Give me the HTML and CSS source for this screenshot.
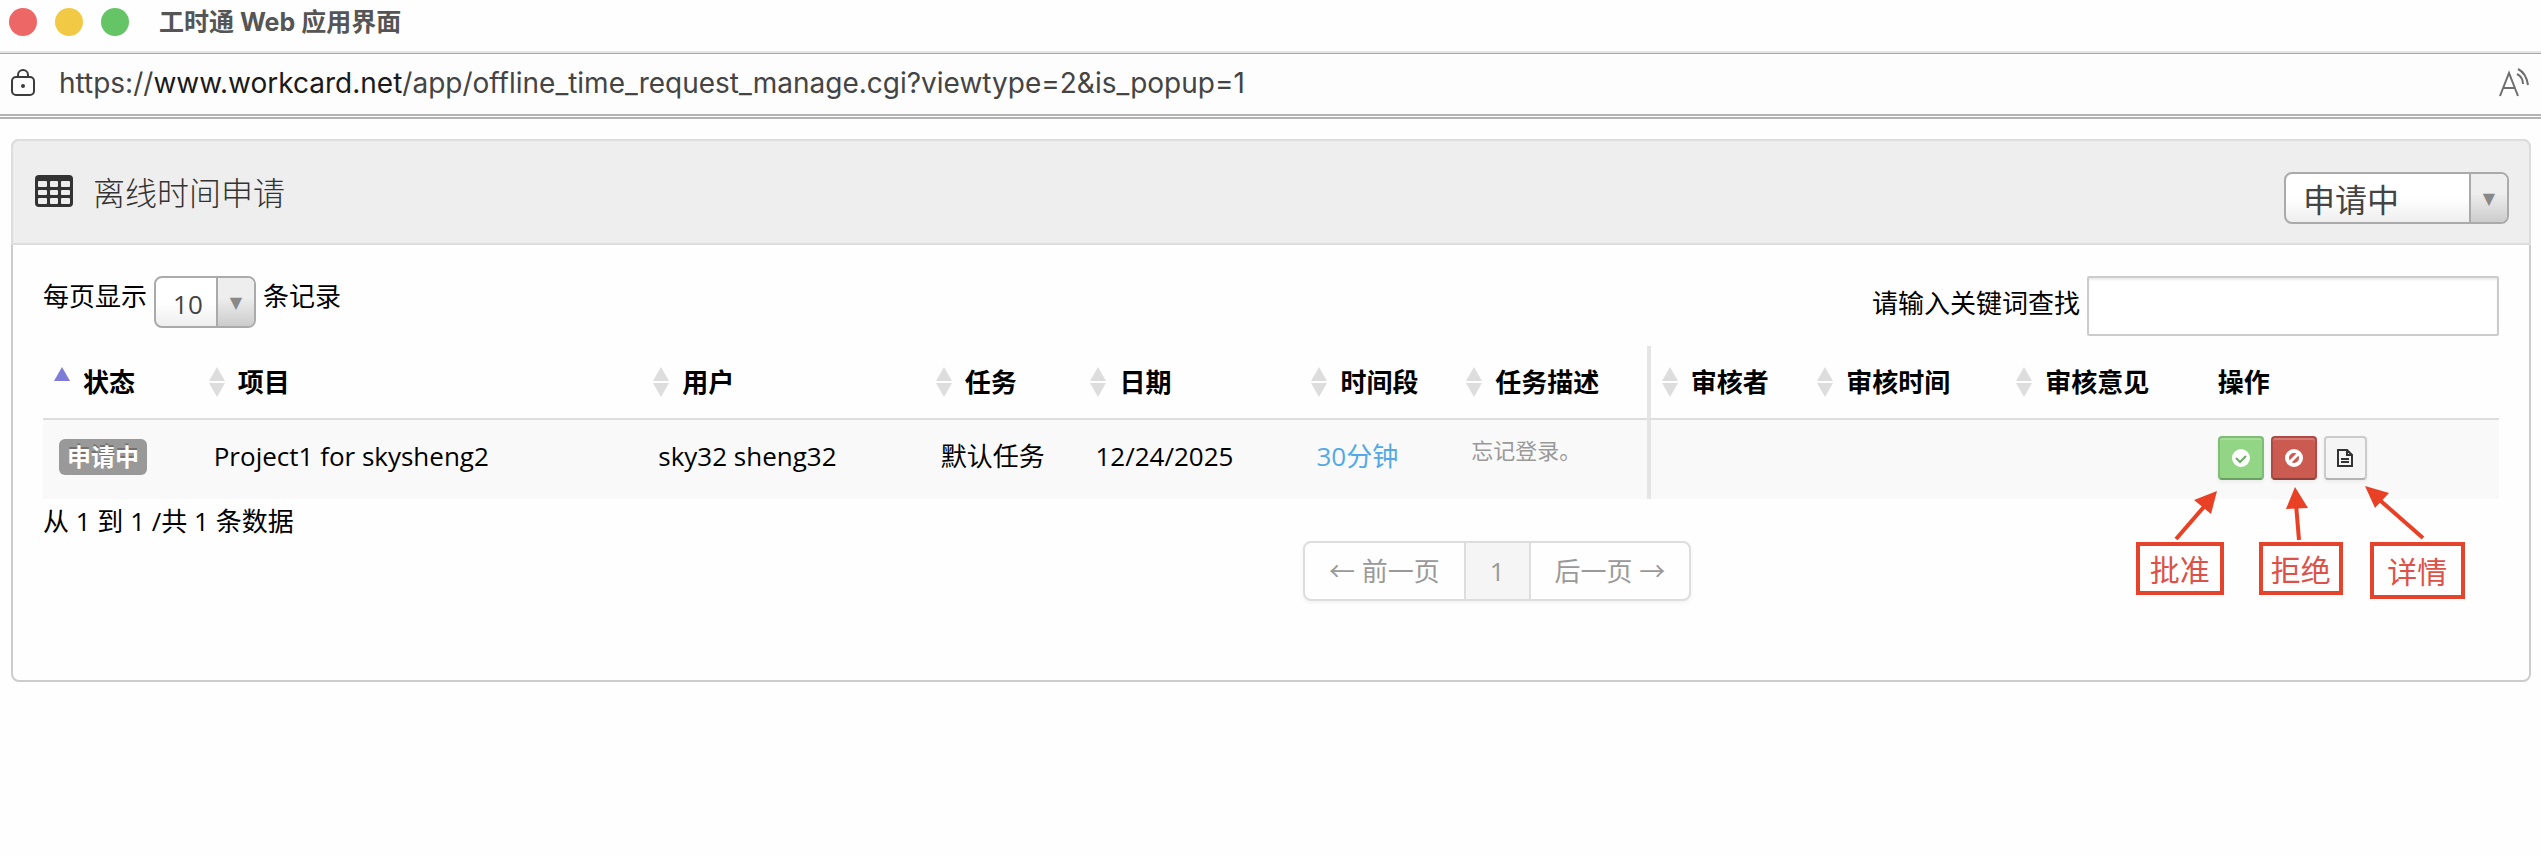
FILE: index.html
```html
<!DOCTYPE html>
<html lang="zh-CN">
<head>
  <meta charset="UTF-8">
  <meta name="viewport" content="width=device-width, initial-scale=1.0">
  <title>工时通 Web 应用界面</title>
  <link rel="stylesheet" href="styles.css">
</head>
<body>
  <header class="titlebar">
    <span class="dot dot-red"></span>
    <span class="dot dot-yellow"></span>
    <span class="dot dot-green"></span>
    <span class="window-title">工时通 Web 应用界面</span>
  </header>

  <div class="addressbar">
    <svg class="lock" width="24" height="28" viewBox="0 0 24 28" fill="none" stroke="#3c3c3c" stroke-width="2">
      <rect x="1" y="8" width="22" height="18" rx="4"/>
      <path d="M7 8V6a5 5 0 0 1 10 0v2"/>
      <circle cx="12" cy="17" r="2" fill="#3c3c3c" stroke="none"/>
    </svg>
    <span class="url">https://<span class="host">www.workcard.net</span>/app/offline_time_request_manage.cgi?viewtype=2&amp;is_popup=1</span>
    <svg class="read-aloud" width="32" height="30" viewBox="0 0 32 30" fill="none" stroke="#6e6e6e" stroke-width="2">
      <path d="M2 28L11 5l9 23M5 20h12M19 6c4 2 6 6 6 10M20 1c6 3 9 9 10 16"/>
    </svg>
  </div>

  <main class="panel">
    <div class="panel-head">
      <svg class="table-icon" width="38" height="32" viewBox="0 0 38 32">
        <rect width="38" height="32" rx="4" fill="#333"/>
        <g fill="#eee">
          <rect x="3" y="6" width="9" height="6" rx="1"/><rect x="15" y="6" width="8" height="6" rx="1"/><rect x="26" y="6" width="9" height="6" rx="1"/>
          <rect x="3" y="15" width="9" height="5" rx="1"/><rect x="15" y="15" width="8" height="5" rx="1"/><rect x="26" y="15" width="9" height="5" rx="1"/>
          <rect x="3" y="23" width="9" height="6" rx="1"/><rect x="15" y="23" width="8" height="6" rx="1"/><rect x="26" y="23" width="9" height="6" rx="1"/>
        </g>
      </svg>
      <h1>离线时间申请</h1>
      <span class="select select-status">
        <select aria-label="状态">
          <option>申请中</option>
        </select>
      </span>
    </div>

    <div class="panel-body">
      <div class="toolbar">
        <div class="page-size">
          <label for="pageSize">每页显示</label>
          <span class="select select-size">
            <select id="pageSize">
              <option>10</option>
            </select>
          </span>
          <span>条记录</span>
        </div>
        <div class="search">
          <label for="keyword">请输入关键词查找</label>
          <input type="text" id="keyword">
        </div>
      </div>

      <table class="requests">
        <colgroup>
          <col class="col-state">
          <col class="col-project">
          <col class="col-user">
          <col class="col-task">
          <col class="col-date">
          <col class="col-period">
          <col class="col-desc">
          <col class="col-reviewer">
          <col class="col-time">
          <col class="col-opinion">
          <col class="col-actions">
        </colgroup>
        <thead>
          <tr>
            <th class="sort sort-asc">状态</th>
            <th class="sort">项目</th>
            <th class="sort">用户</th>
            <th class="sort">任务</th>
            <th class="sort">日期</th>
            <th class="sort">时间段</th>
            <th class="sort">任务描述</th>
            <th class="sort divider">审核者</th>
            <th class="sort">审核时间</th>
            <th class="sort">审核意见</th>
            <th>操作</th>
          </tr>
        </thead>
        <tbody>
          <tr>
            <td><span class="badge">申请中</span></td>
            <td>Project1 for skysheng2</td>
            <td>sky32 sheng32</td>
            <td>默认任务</td>
            <td>12/24/2025</td>
            <td><a href="#">30分钟</a></td>
            <td class="desc">忘记登录。</td>
            <td class="divider"></td>
            <td></td>
            <td></td>
            <td class="actions">
              <div class="buttons">
                <button class="btn btn-ok" aria-label="批准">
                  <svg width="20" height="20" viewBox="0 0 20 20"><circle cx="10" cy="10" r="9" fill="#fff"/><path d="M5 10l4 4 6-6" fill="none" stroke="#69ad62" stroke-width="2"/></svg>
                </button>
                <button class="btn btn-no" aria-label="拒绝">
                  <svg width="20" height="20" viewBox="0 0 20 20" fill="none" stroke="#fff"><circle cx="10" cy="10" r="7" stroke-width="4"/><path d="M5 15L15 5" stroke-width="3"/></svg>
                </button>
                <button class="btn btn-info" aria-label="详情">
                  <svg width="16" height="18" viewBox="0 0 16 18" fill="none" stroke="#333" stroke-width="2"><path d="M1 1h9l5 5v11H1zM10 1v5h5M4 10h8M4 13h8"/></svg>
                </button>
              </div>
              <div class="notes">
                <svg class="arrows" width="330" height="54" viewBox="0 0 330 54" stroke="#e84126" stroke-width="4" fill="#e84126">
                  <path d="M40 53L73 15M163 54L160 18M287 52L238 9"/>
                  <g stroke="none">
                    <path d="M81 5L58 14l17 14zM159 1l-9 22 22-1zM229 0l10 22 14-15z"/>
                  </g>
                </svg>
                <span class="note note-ok">批准</span>
                <span class="note note-no">拒绝</span>
                <span class="note note-info">详情</span>
              </div>
            </td>
          </tr>
        </tbody>
      </table>

      <p class="info">从 1 到 1 /共 1 条数据</p>

      <nav class="pager">
        <a href="#">← 前一页</a>
        <a href="#" class="current">1</a>
        <a href="#">后一页 →</a>
      </nav>
    </div>
  </main>
</body>
</html>
```

FILE: styles.css
```css
* {
  box-sizing: border-box;
}
body {
  margin: 0;
  background: #fefefe;
  color: #000;
  font-family: "Open Sans", "Noto Sans CJK SC", sans-serif;
  font-size: 26px;
  line-height: 40px;
}

/* browser window */
.titlebar {
  display: flex;
  align-items: center;
  gap: 18px;
  height: 54px;
  padding: 0 9px 9px;
  border-bottom: 1px solid #a8a8a8;
  box-shadow: inset 0 -2px #e4e4e4;
}
.dot {
  width: 28px;
  height: 28px;
  border-radius: 50%;
}
.dot-red {
  background: #ec6765;
}
.dot-yellow {
  background: #f2c944;
}
.dot-green {
  background: #65c466;
}
.window-title {
  margin-left: 12px;
  color: #555;
  font-family: Inter, "Noto Sans CJK SC", sans-serif;
  font-size: 25px;
  font-weight: 700;
}
.addressbar {
  display: flex;
  align-items: center;
  height: 65px;
  padding: 0 11px 2px;
  background: #fdfdfd;
  border-bottom: 5px double #b4b4b4;
}
.url {
  flex: 1;
  margin-left: 24px;
  color: #444;
  font-family: Inter, sans-serif;
  font-size: 28px;
}
.host {
  color: #1a1a1a;
}

/* panel */
.panel {
  margin: 20px 10px 0 11px;
  border: 2px solid #ccc;
  border-radius: 8px;
}
.panel-head {
  display: flex;
  align-items: center;
  gap: 20px;
  height: 106px;
  margin: -2px -2px 0;
  padding: 0 20px 3px 22px;
  background: #eee;
  border: 2px solid #ddd;
  border-radius: 8px 8px 0 0;
}
.panel-head h1 {
  flex: 1;
  margin: 0;
  color: #333;
  font-family: "Noto Sans CJK SC", sans-serif;
  font-size: 32px;
  font-weight: 300;
}
.panel-body {
  padding: 31px 30px 79px;
}
.select {
  display: block;
  position: relative;
  height: 52px;
}
.select select {
  appearance: none;
  width: 100%;
  height: 100%;
  padding: 4px 0 0 17px;
  border: 2px solid #aaa;
  border-radius: 8px;
  background: linear-gradient(#fff 50%, #eee);
  color: #444;
  font: inherit;
}
.select::after {
  content: "▼";
  position: absolute;
  top: 2px;
  right: 2px;
  bottom: 2px;
  width: 36px;
  border-left: 2px solid #aaa;
  border-radius: 0 6px 6px 0;
  background: linear-gradient(#eee 40%, #ccc);
  color: #888;
  font-family: "DejaVu Sans", sans-serif;
  font-size: 16px;
  line-height: 50px;
  text-align: center;
  pointer-events: none;
}
.select-status {
  width: 225px;
  margin-top: 14px;
}
.select-status select {
  font-size: 32px;
}
.select-size {
  width: 102px;
}

/* list controls */
.toolbar {
  display: flex;
  justify-content: space-between;
  height: 70px;
}
.page-size {
  display: flex;
  align-items: flex-start;
  gap: 7px;
}
.search {
  display: flex;
  align-items: flex-start;
  gap: 7px;
}
.search label {
  padding-top: 7px;
}
.search input {
  width: 412px;
  height: 60px;
  padding: 8px 12px;
  border: 2px solid #ccc;
  border-radius: 2px;
  background: #fff;
  box-shadow: inset 0 2px 2px rgba(0, 0, 0, 0.08);
  font: inherit;
}

/* request table */
.requests {
  width: 100%;
  table-layout: fixed;
  border-collapse: separate;
  border-spacing: 0;
}
.col-state { width: 6.3%; }
.col-project { width: 18.1%; }
.col-user { width: 11.5%; }
.col-task { width: 6.3%; }
.col-date { width: 9%; }
.col-period { width: 6.3%; }
.col-desc { width: 7.8%; }
.col-reviewer { width: 6.5%; }
.col-time { width: 8.1%; }
.col-opinion { width: 8%; }
.col-actions { width: 12.1%; }
th, td {
  padding: 16px;
  text-align: left;
  white-space: nowrap;
}
th {
  height: 74px;
  border-bottom: 2px solid #ddd;
  font-weight: 700;
}
td {
  height: 79px;
  background: #f9f9f9;
  vertical-align: top;
}
.sort {
  position: relative;
  padding-left: 40px;
}
.sort::before,
.sort::after {
  content: "";
  position: absolute;
  left: 11px;
  border: 8px solid transparent;
}
.sort::before {
  top: 13px;
  border-bottom: 14px solid #ddd;
}
.sort::after {
  top: 37px;
  border-top: 14px solid #ddd;
}
.sort-asc::before {
  border-bottom-color: #7d7dd8;
}
.sort-asc::after {
  display: none;
}
.divider {
  border-left: 4px solid #e5e5e5;
}
.badge {
  display: inline-block;
  padding: 0 8px;
  border-radius: 6px;
  background: #999;
  color: #fff;
  font-size: 24px;
  font-weight: 700;
  line-height: 36px;
  text-shadow: 0 -2px rgba(0, 0, 0, 0.25);
}
td a {
  color: #54a9e4;
  text-decoration: none;
}
.desc {
  padding-top: 10px;
  color: #999;
  font-size: 22px;
}

/* row actions */
.actions {
  position: relative;
}
.buttons {
  display: flex;
  gap: 7px;
}
.btn {
  display: flex;
  align-items: center;
  justify-content: center;
  width: 46px;
  height: 44px;
  padding: 0;
  border: 2px solid;
  border-radius: 4px;
}
.btn-ok {
  background: #92d685;
  border-color: #7fbd76 #7fbd76 #69a162;
  box-shadow: inset 0 2px #a6dd9b, 0 2px 4px rgba(0, 0, 0, 0.06);
}
.btn-no {
  background: #cb5a50;
  border-color: #ad4c46 #ad4c46 #92403b;
  box-shadow: inset 0 2px #d67b73, 0 2px 4px rgba(0, 0, 0, 0.06);
}
.btn-info {
  width: 43px;
  background: #f5f5f5;
  border-color: #ccc #ccc #b3b3b3;
  box-shadow: 0 2px 4px rgba(0, 0, 0, 0.06);
}
.notes {
  display: flex;
  position: absolute;
  top: 66px;
  left: -66px;
  width: 330px;
  padding-top: 56px;
  align-items: flex-start;
}
.arrows {
  position: absolute;
  top: 0;
  left: 0;
}
.note {
  border: 4px solid #e5432b;
  color: #dc5148;
  font-family: "Noto Sans CJK SC", sans-serif;
  font-size: 30px;
  line-height: 45px;
  text-align: center;
}
.note-ok {
  width: 88px;
}
.note-no {
  width: 84px;
  margin-left: 35px;
}
.note-info {
  width: 95px;
  margin-left: 27px;
  line-height: 49px;
}

/* footer */
.info {
  margin: 2px 0 0;
}
.pager {
  display: flex;
  width: fit-content;
  margin-left: 51.3%;
  border: 2px solid #ddd;
  border-radius: 8px;
  box-shadow: 0 2px 4px rgba(0, 0, 0, 0.05);
}
.pager a {
  padding: 8px 24px;
  color: #999;
  text-decoration: none;
}
.pager .current {
  background: #f5f5f5;
  border-left: 2px solid #ddd;
  border-right: 2px solid #ddd;
}
```
